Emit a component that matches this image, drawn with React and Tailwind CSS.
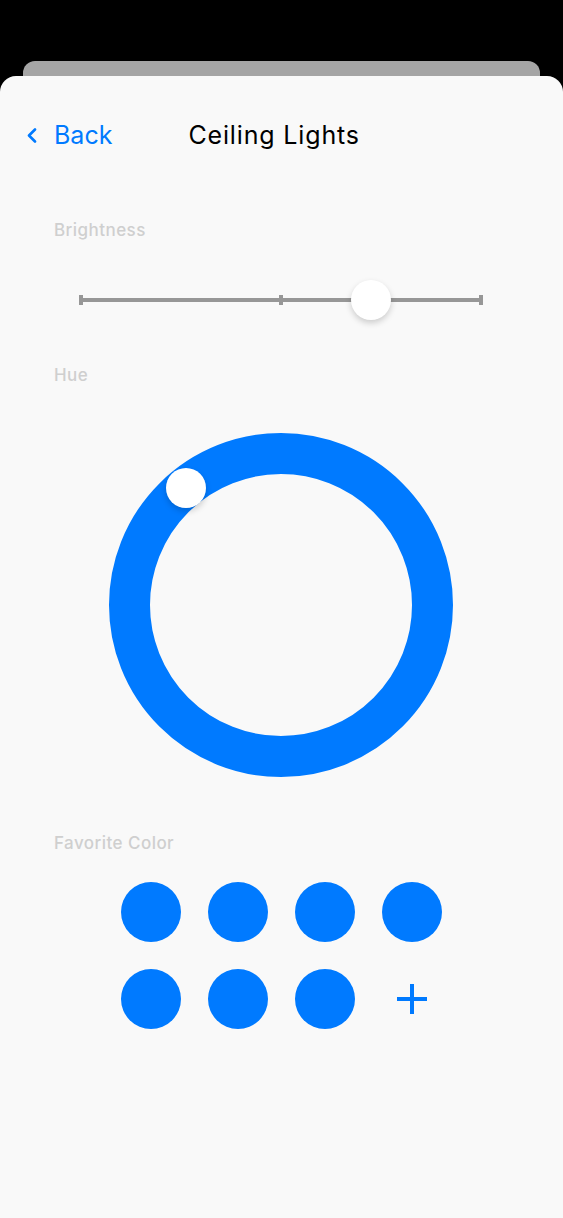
import React from 'react';

const FAVORITES = [1, 2, 3, 4, 5, 6, 7];

const Label = ({ children, className = '' }) => (
    <div className={`ml-[54px] text-[17px] leading-[20px] font-medium tracking-[0.45px] text-[#cfcfcf] ${className}`}>{children}</div>
);

const App = () => {
    return (
        <div className="min-h-[1218px] bg-black pt-[61px] flex flex-col" style={{ fontFamily: 'Inter, "Noto Sans", sans-serif' }}>
            {/* card peeking out behind the sheet */}
            <div className="mx-[23px] h-[15px] rounded-t-[12px] bg-[#a5a5a5]" />

            <div className="flex-1 rounded-t-[16px] bg-[#f9f9f9] flex flex-col">
                {/* nav bar */}
                <div className="relative mt-[44px] h-[30px] flex items-center">
                    <button className="flex items-center ml-[27px] text-[#007aff] text-[25px] leading-[30px]">
                        <svg width="10" height="15" viewBox="0 0 10 15" className="mr-[17px]">
                            <polyline points="8,1.5 2,7.5 8,13.5" fill="none" stroke="#007aff" strokeWidth="2.6" strokeLinecap="round" strokeLinejoin="round" />
                        </svg>
                        Back
                    </button>
                    <h1 className="ml-[76px] text-[25px] leading-[30px] font-normal tracking-[0.85px] text-black">Ceiling Lights</h1>
                </div>

                {/* brightness */}
                <Label className="mt-[70px]">Brightness</Label>
                <div className="relative mt-[40px] h-[40px] ml-[79px] w-[404px] flex items-center">
                    <div className="w-[4px] h-[10px] bg-[#979797]" />
                    <div className="flex-1 h-[4px] bg-[#979797]" />
                    <div className="w-[4px] h-[10px] bg-[#979797]" />
                    <div className="flex-1 h-[4px] bg-[#979797]" />
                    <div className="w-[4px] h-[10px] bg-[#979797]" />
                    <div className="absolute left-[272px] top-0 w-[40px] h-[40px] rounded-full bg-white shadow-[0_3px_6px_rgba(0,0,0,0.18)]" />
                </div>

                {/* hue */}
                <Label className="mt-[45px]">Hue</Label>
                <div className="relative mt-[48px] ml-[109px] w-[344px] h-[344px] rounded-full border-[41px] border-[#007aff]">
                    <div className="absolute left-[16px] top-[-6px] w-[40px] h-[40px] rounded-full bg-white shadow-[0_3px_6px_rgba(0,0,0,0.18)]" />
                </div>

                {/* favorites */}
                <Label className="mt-[56px]">Favorite Color</Label>
                <div className="mt-[29px] ml-[121px] grid grid-cols-[repeat(4,60px)] gap-[27px]">
                    {FAVORITES.map((c) => (
                        <div key={c} className="w-[60px] h-[60px] rounded-full bg-[#007aff]" />
                    ))}
                    <button className="w-[60px] h-[60px] flex items-center justify-center">
                        <svg width="30" height="30" viewBox="0 0 30 30">
                            <path d="M15 0V30M0 15H30" stroke="#007aff" strokeWidth="4" />
                        </svg>
                    </button>
                </div>
            </div>
        </div>
    );
};

export default App;
